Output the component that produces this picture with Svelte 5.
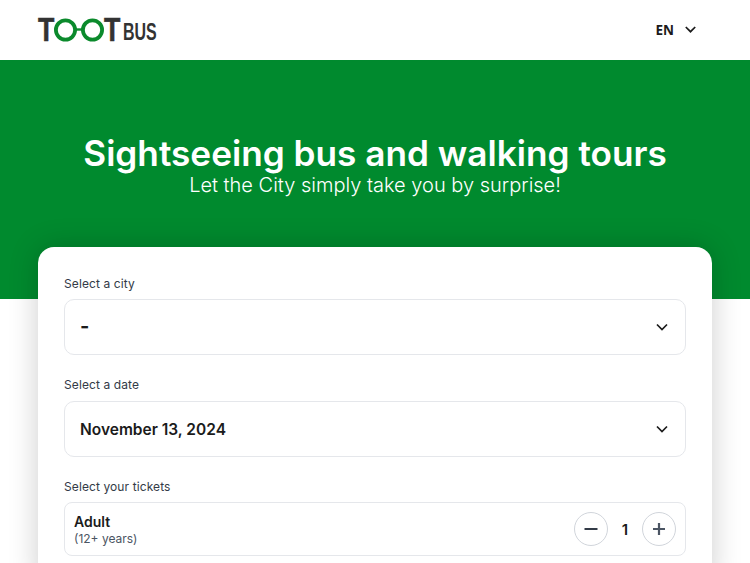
<script lang="ts">
	const tickets = [{ name: 'Adult', note: '(12+ years)', count: 1 }];
</script>

<div class="page">
	<header class="topbar">
		<div class="logo" aria-label="TootBus">
			<span class="logo-t">T</span>
			<svg class="logo-eyes" width="50" height="24" viewBox="0 0 50 24" fill="none">
				<circle cx="11.5" cy="12" r="9.6" stroke="#0b8a2c" stroke-width="3.8" />
				<circle cx="38.5" cy="12" r="9.6" stroke="#0b8a2c" stroke-width="3.8" />
				<path d="M20 11.5h10" stroke="#0b8a2c" stroke-width="2.4" />
			</svg>
			<span class="logo-t">T</span>
			<span class="logo-bus">BUS</span>
		</div>
		<button class="lang">
			<span>EN</span>
			<svg width="11" height="7" viewBox="0 0 11 7" fill="none">
				<path d="M.8 1l4.7 4.7L10.2 1" stroke="#1b1b1b" stroke-width="1.7" />
			</svg>
		</button>
	</header>

	<section class="hero">
		<h1>Sightseeing bus and walking tours</h1>
		<p>Let the City simply take you by surprise!</p>
	</section>

	<main class="card">
		<div class="field">
			<span class="label">Select a city</span>
			<div class="select">
				<span class="empty">-</span>
				<svg width="12" height="8" viewBox="0 0 12 8" fill="none">
					<path d="M1 1.5l5 5 5-5" stroke="#1b1b1b" stroke-width="1.7" />
				</svg>
			</div>
		</div>
		<div class="field">
			<span class="label">Select a date</span>
			<div class="select">
				<span class="value">November 13, 2024</span>
				<svg width="12" height="8" viewBox="0 0 12 8" fill="none">
					<path d="M1 1.5l5 5 5-5" stroke="#1b1b1b" stroke-width="1.7" />
				</svg>
			</div>
		</div>
		<div class="field">
			<span class="label">Select your tickets</span>
			{#each tickets as t}
				<div class="ticket">
					<div class="ticket-info">
						<strong>{t.name}</strong>
						<span>{t.note}</span>
					</div>
					<div class="stepper">
						<button class="round" aria-label="Remove">
							<svg width="14" height="14" viewBox="0 0 14 14"><path d="M.5 7h13" stroke="#333b47" stroke-width="2" /></svg>
						</button>
						<span class="count">{t.count}</span>
						<button class="round" aria-label="Add">
							<svg width="14" height="14" viewBox="0 0 14 14"><path d="M1 7h12M7 1v12" stroke="#4b5563" stroke-width="2.2" /></svg>
						</button>
					</div>
				</div>
			{/each}
		</div>
	</main>
</div>

<style>
	:global(body) {
		margin: 0;
		background: #fff;
	}

	.page {
		height: 563px;
		overflow: hidden;
		font-family: Inter, 'Noto Sans', sans-serif;
		color: #1b1b1b;
	}

	.topbar {
		height: 60px;
		box-sizing: border-box;
		padding: 0 54px 0 38px;
		display: flex;
		align-items: center;
		justify-content: space-between;
		background: #fff;
	}

	.logo {
		display: flex;
		align-items: center;
		height: 30px;
		color: #333;
		font-family: 'Liberation Sans', sans-serif;
		font-weight: 700;
	}

	.logo-t {
		width: 16px;
		font-size: 33.5px;
		line-height: 30px;
		transform: scaleX(0.8);
		transform-origin: left center;
		-webkit-text-stroke: 0.5px #333;
	}

	.logo-eyes {
		margin: 0;
	}

	.logo-bus {
		width: 34px;
		margin: 4px 0 0 3px;
		font-size: 23.5px;
		line-height: 21px;
		transform: scaleX(0.68);
		transform-origin: left center;
	}

	.lang {
		display: flex;
		align-items: center;
		gap: 11px;
		padding: 0 0 1px;
		border: 0;
		background: none;
		font: 700 13.5px 'Open Sans', sans-serif;
		color: #1b1b1b;
	}

	.hero {
		height: 239px;
		box-sizing: border-box;
		padding-top: 72px;
		background: #008a2e;
		color: #fff;
		text-align: center;
	}

	.hero h1 {
		margin: 0;
		font-size: 35.2px;
		line-height: 42px;
		font-weight: 600;
	}

	.hero p {
		margin: 0;
		font-size: 20px;
		line-height: 22px;
		font-weight: 300;
	}

	.card {
		position: relative;
		margin: -52px 38px 0;
		padding: 28px 26px;
		background: #fff;
		border-radius: 16px 16px 0 0;
		box-shadow: 0 0 30px rgba(0, 0, 0, 0.2);
		display: flex;
		flex-direction: column;
		gap: 21.1px;
	}

	.field {
		display: flex;
		flex-direction: column;
		gap: 6.4px;
	}

	.label {
		font-size: 12px;
		line-height: 18px;
		letter-spacing: 0.1px;
		color: #333b47;
	}

	.select {
		height: 56px;
		box-sizing: border-box;
		padding: 0 17px 0 15px;
		display: flex;
		align-items: center;
		justify-content: space-between;
		border: 1px solid #e5e7eb;
		border-radius: 10px;
		font-size: 15.5px;
		font-weight: 600;
	}

	.value {
		margin-top: 1px;
	}

	.empty {
		margin-top: -3px;
		font-size: 20px;
		font-weight: 700;
	}

	.ticket {
		height: 54px;
		box-sizing: border-box;
		padding: 0 9px;
		display: flex;
		align-items: center;
		justify-content: space-between;
		border: 1px solid #e5e7eb;
		border-radius: 8px;
	}

	.ticket-info {
		display: flex;
		flex-direction: column;
		padding-top: 1px;
		font-size: 12px;
		line-height: 17px;
		color: #4b5563;
	}

	.ticket-info strong {
		font-size: 14px;
		font-weight: 600;
		color: #1b1b1b;
	}

	.stepper {
		display: flex;
		align-items: center;
		gap: 13px;
	}

	.round {
		width: 34px;
		height: 34px;
		padding: 0;
		display: flex;
		align-items: center;
		justify-content: center;
		background: #fff;
		border: 1px solid #d1d5db;
		border-radius: 50%;
	}

	.count {
		width: 8px;
		text-align: center;
		font-size: 15px;
		font-weight: 600;
	}
</style>
